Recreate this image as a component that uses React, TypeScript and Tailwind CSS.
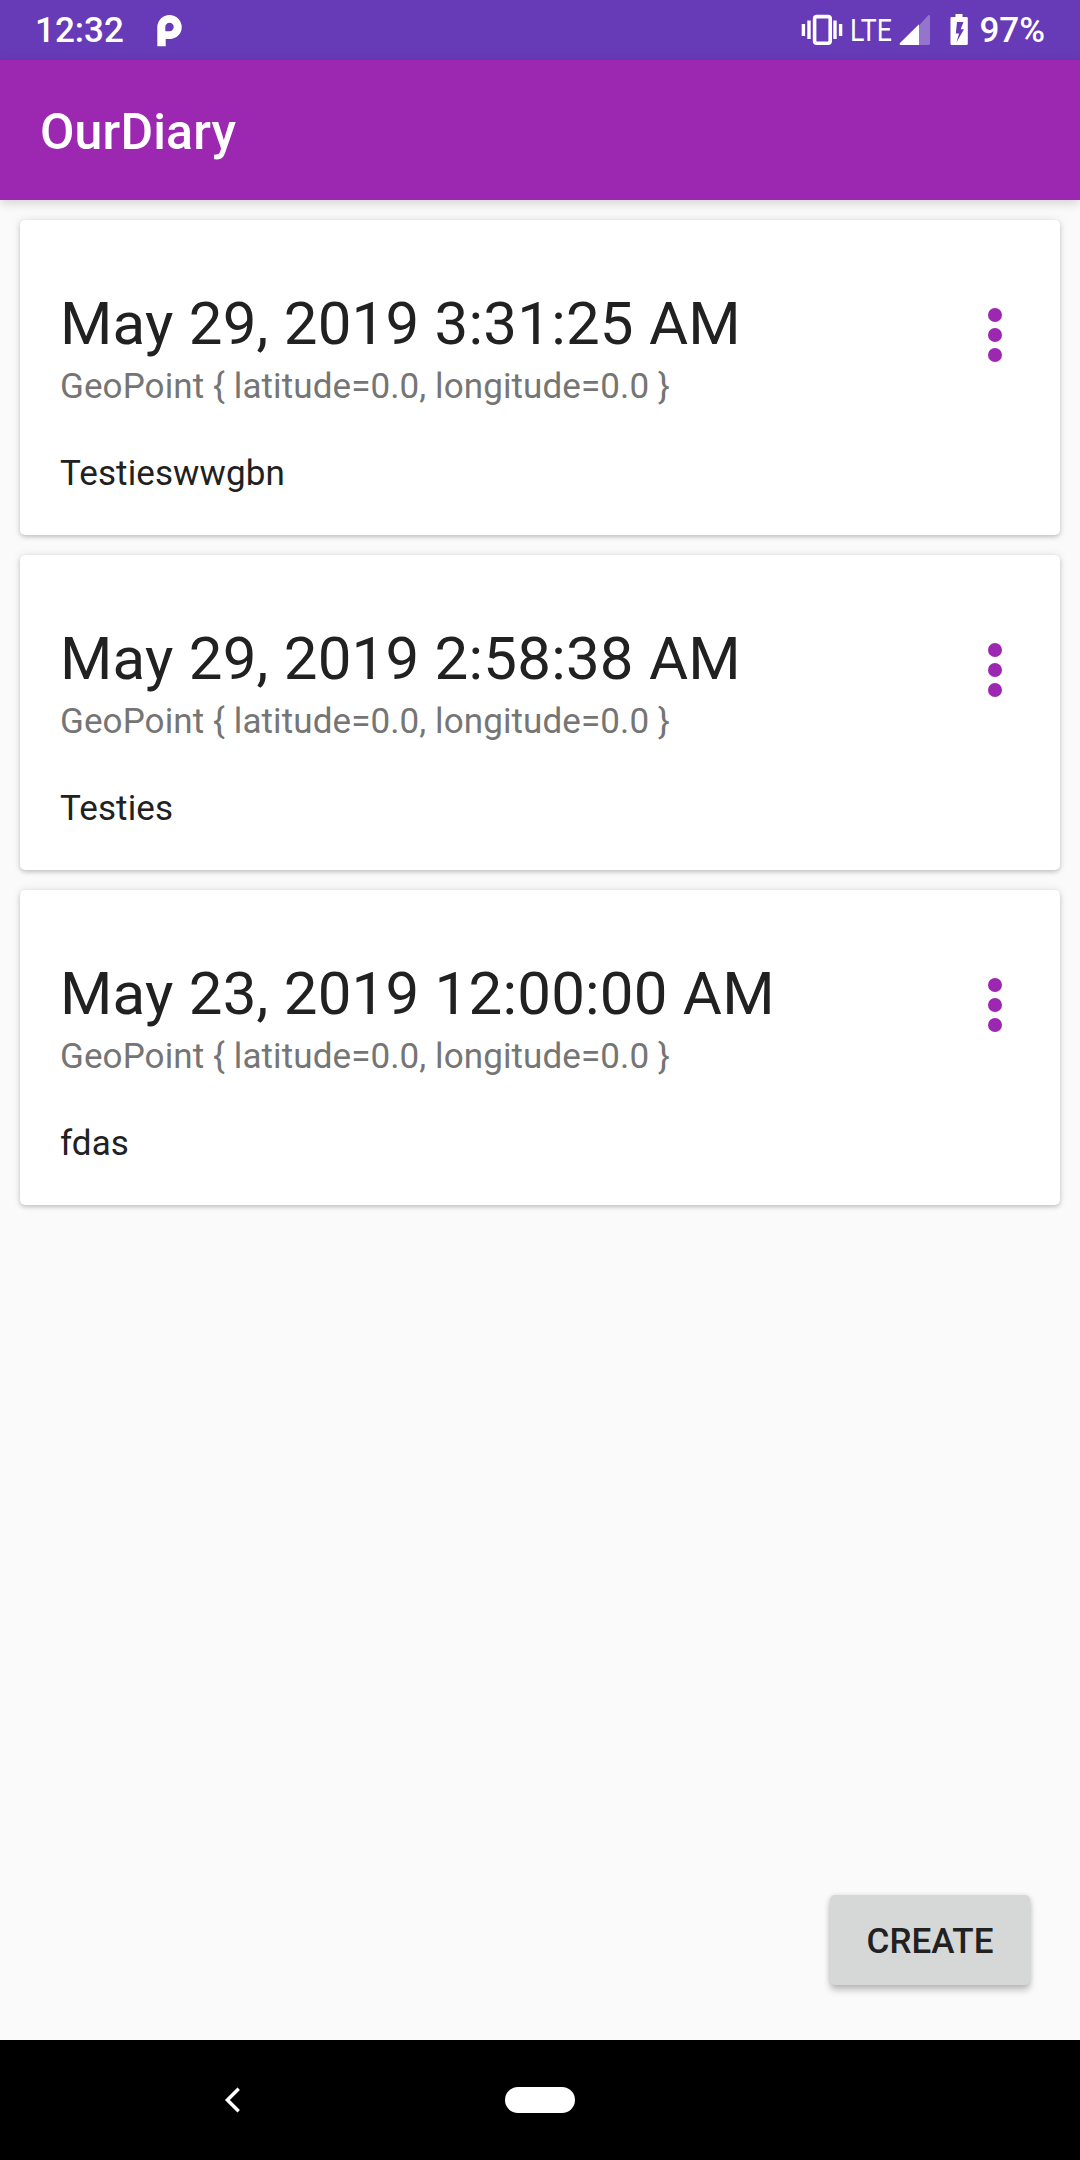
const entries = [
  { date: "May 29, 2019 3:31:25 AM", place: "GeoPoint { latitude=0.0, longitude=0.0 }", text: "Testieswwgbn" },
  { date: "May 29, 2019 2:58:38 AM", place: "GeoPoint { latitude=0.0, longitude=0.0 }", text: "Testies" },
  { date: "May 23, 2019 12:00:00 AM", place: "GeoPoint { latitude=0.0, longitude=0.0 }", text: "fdas" },
];

function ParkingIcon() {
  return (
    <svg className="ml-[32px] h-[60px] w-[28px] shrink-0" viewBox="156 0 28 60">
      <path
        fillRule="evenodd"
        d="M157.300 46.300V27.200a12.200 12.200 0 0 1 24.400 0 11.800 11.800 0 0 1-11.800 11.800h-4.200v7.300zM165.300 31.200v-4.200a4.200 4.200 0 0 1 8.400 0 4.200 4.200 0 0 1-4.200 4.200z"
        fill="#fff"
      />
    </svg>
  );
}

function VibrateIcon() {
  return (
    <svg className="h-[60px] w-[42px] shrink-0" viewBox="801 0 42 60" fill="none">
      <rect x="814.6" y="16.6" width="15.6" height="26.6" rx="2.2" stroke="#fff" strokeWidth="3.6" />
      <path d="M803.400 24v12M840.600 24v12" stroke="#fff" strokeWidth="3.400" />
      <path d="M809 20.500v18.500M835 20.500v18.500" stroke="#fff" strokeWidth="3.400" />
    </svg>
  );
}

function SignalIcon() {
  return (
    <svg className="h-[60px] w-[31px] shrink-0" viewBox="899 0 31 60">
      <path d="M919 25.500V45h9.700a1.300 1.300 0 0 0 1.300-1.300V16.200c0-1.300-1-1.700-1.900-.8z" fill="#fff" fillOpacity=".3" />
      <path d="M919 24.300V45h-18.200c-1.300 0-1.700-1-.8-1.900z" fill="#fff" />
    </svg>
  );
}

function BatteryIcon() {
  return (
    <svg className="ml-[20px] h-[60px] w-[18px] shrink-0" viewBox="949.5 0 18 60">
      <path
        fillRule="evenodd"
        d="M955 14h7v3h4a1.300 1.300 0 0 1 1.300 1.300v25.400a1.300 1.300 0 0 1-1.300 1.300h-14.700a1.300 1.300 0 0 1-1.300-1.300v-25.400a1.300 1.300 0 0 1 1.300-1.300h3.700zM956.500 22l-1.200 11.500h3.200L956 42.300l7.500-13.100h-3.300L963 22z"
        fill="#fff"
      />
    </svg>
  );
}

function Card({ date, place, text }: { date: string; place: string; text: string }) {
  return (
    <article className="flex h-[315px] justify-between rounded-[5px] bg-white pr-[58px] pl-10 shadow-[0_2px_4px_rgba(0,0,0,0.18),0_0_8px_rgba(0,0,0,0.10)]">
      <div className="pt-[69px] whitespace-nowrap text-[#212121]">
        <h2 className="text-[60px] leading-[70px] tracking-[0.22px]">{date}</h2>
        <p className="mt-[7px] text-[35px] leading-[42px] tracking-[0.1px] text-[#757575]">{place}</p>
        <p className="mt-[45px] text-[35px] leading-[42px] tracking-[0.1px]">{text}</p>
      </div>
      <button aria-label="More options" className="mt-[88px] flex h-[54px] w-[14px] flex-col justify-between">
        <span className="size-[14px] rounded-full bg-[#9c27b0]" />
        <span className="size-[14px] rounded-full bg-[#9c27b0]" />
        <span className="size-[14px] rounded-full bg-[#9c27b0]" />
      </button>
    </article>
  );
}

export default function App() {
  return (
    <div className="flex h-[2160px] w-[1080px] flex-col overflow-hidden bg-[#fafafa] font-['Roboto',sans-serif]">
      <div className="flex h-[60px] shrink-0 items-center justify-between bg-[#673ab7] pr-[35px] pl-[35px] text-[35px] font-medium text-white">
        <div className="flex items-center">
          <span className="pt-[2px] leading-[62px]">12:32</span>
          <ParkingIcon />
        </div>
        <div className="flex items-center">
          <VibrateIcon />
          <span className="ml-[7px] w-[49px] origin-left scale-x-[0.86] text-[31px] leading-[59px] font-normal">LTE</span>
          <SignalIcon />
          <BatteryIcon />
          <span className="ml-[11px] pt-[2px] leading-[62px]">97%</span>
        </div>
      </div>
      <header className="z-10 flex h-[140px] shrink-0 items-center bg-[#9c27b0] pl-10 text-[50px] leading-[60px] font-medium tracking-[0.15px] text-white shadow-[0_3px_10px_rgba(0,0,0,0.16)]">
        <h1 className="pt-[4px]">OurDiary</h1>
      </header>
      <main className="flex flex-1 flex-col gap-5 p-5">
        {entries.map((e) => (
          <Card key={e.date} {...e} />
        ))}
        <button className="mt-auto mr-[30px] mb-[35px] h-[90px] w-[200px] self-end rounded-[5px] bg-[#d6d8d7] pt-[3px] text-[35px] leading-[42px] font-medium text-[#212121] shadow-[0_5px_7px_rgba(0,0,0,0.24),0_0_5px_rgba(0,0,0,0.10)]">
          CREATE
        </button>
      </main>
      <nav className="grid h-[120px] shrink-0 grid-cols-[1fr_70px_1fr] items-center bg-black">
        <svg className="ml-[224px] h-[28px] w-[18px]" viewBox="224 2086 18 28" fill="none">
          <path d="M238.700 2088.700L227.400 2100l11.300 11.300" stroke="#fff" strokeWidth="3.500" />
        </svg>
        <span className="h-[26px] rounded-full bg-white" />
      </nav>
    </div>
  );
}
